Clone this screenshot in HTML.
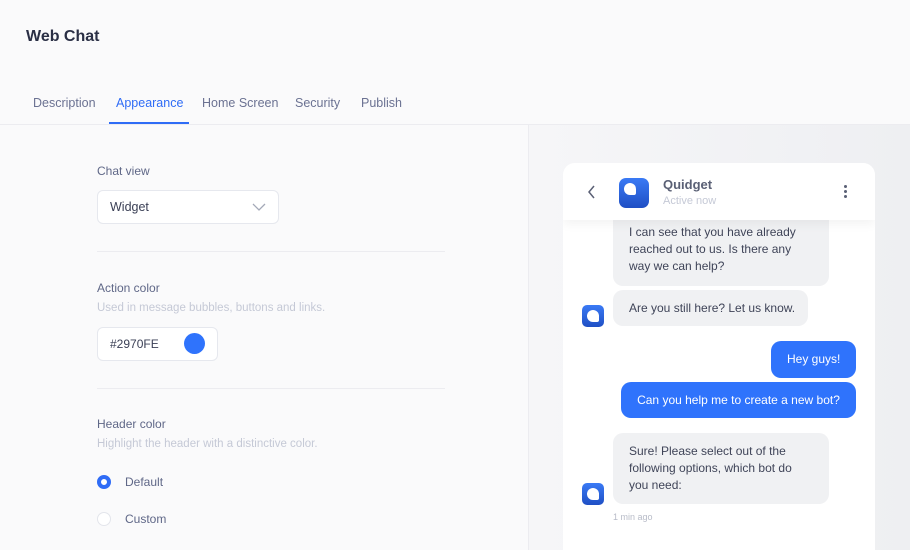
<!DOCTYPE html>
<html style="width:910px;height:550px;overflow:hidden"><head><style>
*{margin:0;padding:0;box-sizing:border-box}
body{width:910px;height:550px;overflow:hidden;background:#fafafb;font-family:"Liberation Sans",sans-serif;position:relative;color:#3a3f55}
.a{position:absolute;white-space:nowrap}
.tab{font-size:12.5px;color:#6b7292;top:96px}
.lbl{font-size:12px;color:#5f6787}
.sub{font-size:11.5px;color:#c5c9d6}
.box{position:absolute;background:#fff;border:1px solid #e6e8ee;border-radius:6px}
.hr{position:absolute;left:97px;width:348px;height:1px;background:#ececf0}
.bub{position:absolute;background:#f0f1f3;border-radius:10px;font-size:12px;line-height:17px;color:#3f4458;padding:10px 16px}
.blue{position:absolute;background:#2f73fc;border-radius:10px;font-size:12px;color:#fff;padding:10px 16px;line-height:17px}
.av{position:absolute;width:22px;height:22px;border-radius:5px;background:linear-gradient(#3a7af5,#1f4fc4)}
.av::after{content:"";position:absolute;left:5px;top:5px;width:12px;height:12px;border-radius:50% 50% 2px 50%;background:#fff}
</style></head><body>
<div class="a" style="left:26px;top:28px;font-size:16px;font-weight:bold;color:#2a2f45">Web Chat</div>
<div class="a tab" style="left:33px">Description</div>
<div class="a tab" style="left:116px;color:#2f6cf6">Appearance</div>
<div class="a tab" style="left:202px">Home Screen</div>
<div class="a tab" style="left:295px">Security</div>
<div class="a tab" style="left:361px">Publish</div>
<div class="a" style="left:0;top:124px;width:910px;height:1px;background:#ececf0"></div>
<div class="a" style="left:109px;top:122px;width:80px;height:2px;background:#2f6cf6"></div>

<div class="a lbl" style="left:97px;top:164px">Chat view</div>
<div class="box" style="left:97px;top:190px;width:182px;height:34px"></div>
<div class="a" style="left:110px;top:200px;font-size:12.5px;color:#3a3f55">Widget</div>
<svg class="a" style="left:252px;top:202px" width="14" height="10"><path d="M1 2 L7 8 L13 2" stroke="#a4a9b8" stroke-width="1.3" fill="none"/></svg>
<div class="hr" style="top:251px"></div>
<div class="a lbl" style="left:97px;top:281px">Action color</div>
<div class="a sub" style="left:97px;top:302px">Used in message bubbles, buttons and links.</div>
<div class="box" style="left:97px;top:327px;width:121px;height:34px"></div>
<div class="a" style="left:110px;top:337px;font-size:12px;color:#3a3f55">#2970FE</div>
<div class="a" style="left:184px;top:333px;width:21px;height:21px;border-radius:50%;background:#2f73fc"></div>
<div class="hr" style="top:388px"></div>
<div class="a lbl" style="left:97px;top:417px">Header color</div>
<div class="a sub" style="left:97px;top:438px">Highlight the header with a distinctive color.</div>
<div class="a" style="left:97px;top:475px;width:14px;height:14px;border-radius:50%;border:4px solid #2f6cf6;background:#fff"></div>
<div class="a lbl" style="left:125px;top:475px">Default</div>
<div class="a" style="left:97px;top:512px;width:14px;height:14px;border-radius:50%;border:1px solid #e3e5eb;background:#fff"></div>
<div class="a lbl" style="left:125px;top:512px">Custom</div>

<div class="a" style="left:528px;top:125px;width:382px;height:425px;background:linear-gradient(90deg,#f6f6f8,#eeeff2);border-left:1px solid #ececf0"></div>
<div class="a" style="left:563px;top:163px;width:312px;height:400px;background:#fff;border-radius:12px;overflow:hidden">
  <div class="bub" style="left:50px;top:52px;width:216px;height:71px;border-radius:0 0 10px 10px;padding-top:9px">I can see that you have already<br>reached out to us. Is there any<br>way we can help?</div>
  <div class="bub" style="left:50px;top:127px;width:195px;height:36px">Are you still here? Let us know.</div>
  <div class="av" style="left:19px;top:142px"></div>
  <div class="blue" style="left:208px;top:178px;width:85px;height:37px;text-align:center">Hey guys!</div>
  <div class="blue" style="left:58px;top:219px;width:235px;height:36px;text-align:center">Can you help me to create a new bot?</div>
  <div class="bub" style="left:50px;top:270px;width:216px;height:71px">Sure! Please select out of the<br>following options, which bot do<br>you need:</div>
  <div class="av" style="left:19px;top:320px"></div>
  <div class="a" style="left:50px;top:349px;font-size:9px;color:#b8bcc8">1 min ago</div>
  <div class="a" style="left:0;top:0;width:312px;height:57px;background:#fff;box-shadow:0 4px 10px rgba(0,0,0,0.05)">
    <svg class="a" style="left:24px;top:22px" width="10" height="14"><path d="M7 1 L2 7 L7 13" stroke="#5a6075" stroke-width="1.5" fill="none"/></svg>
    <div class="av" style="left:56px;top:15px;width:30px;height:30px;border-radius:7px"></div>
    <div class="a" style="left:100px;top:14px;font-size:13px;font-weight:bold;color:#5a6075">Quidget</div>
    <div class="a" style="left:100px;top:32px;font-size:11px;color:#c5c9d6">Active now</div>
    <div class="a" style="left:281px;top:22px;width:3px;height:3px;border-radius:50%;background:#5a6075;box-shadow:0 5px 0 #5a6075,0 10px 0 #5a6075"></div>
  </div>
</div>
</body></html>
